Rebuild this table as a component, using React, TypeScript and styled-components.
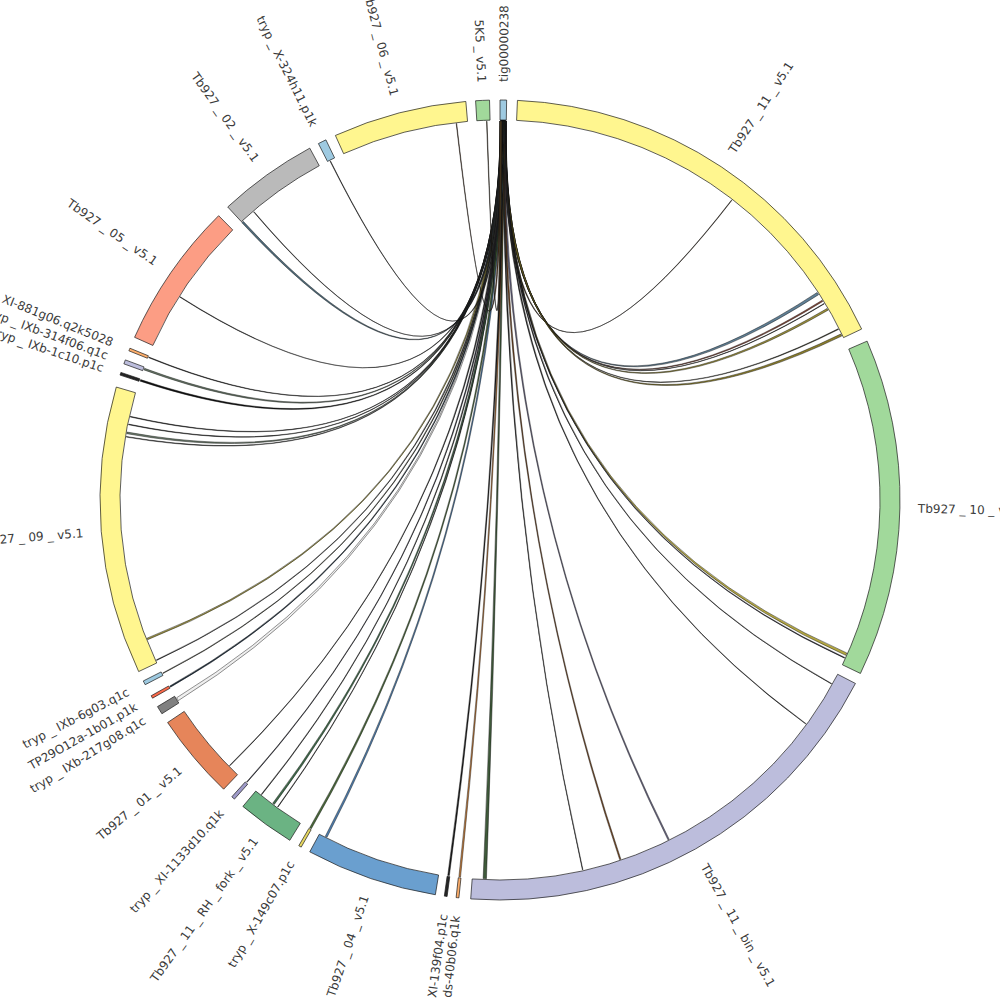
import React from 'react';
import styled, { createGlobalStyle } from 'styled-components';

// geometry of the ideogram ring
const CX = 500;
const CY = 500;
const R_OUT = 400;
const R_IN = 380;
const R_LINK = 379;
const R_LABEL = 418;

const GlobalStyle = createGlobalStyle`
  html, body {
    margin: 0;
    padding: 0;
    background: #ffffff;
  }
`;

const Page = styled.div`
  width: 1000px;
  height: 1000px;
  overflow: hidden;
  background: #ffffff;
`;

const Canvas = styled.svg`
  display: block;
  width: 1000px;
  height: 1000px;
`;

const Segment = styled.path<{ $fill: string }>`
  fill: ${(p) => p.$fill};
  stroke: #1a1a1a;
  stroke-width: 0.7;
`;

const Ribbon = styled.path<{ $fill: string }>`
  fill: ${(p) => p.$fill};
  stroke: #0d0d0d;
  stroke-width: 0.45;
`;

const Label = styled.text<{ $anchor: 'start' | 'end' }>`
  font-family: 'DejaVu Sans', Verdana, sans-serif;
  font-size: 12px;
  fill: #3a3a3a;
  text-anchor: ${(p) => p.$anchor};
`;

interface Chrom {
  start: number;
  end: number;
  color: string;
  label: string;
}

// angles in degrees, clockwise from 12 o'clock
const chroms: Chrom[] = [
  { start: 0.0, end: 0.95, color: '#9ecae1', label: 'tig00000238' },
  { start: 2.5, end: 64.7, color: '#fff68f', label: 'Tb927 _ 11 _ v5.1' },
  { start: 66.6, end: 115.7, color: '#a1d99b', label: 'Tb927 _ 10 _ v5.1' },
  { start: 117.3, end: 184.2, color: '#bcbddc', label: 'Tb927 _ 11 _ bin _ v5.1' },
  { start: 185.9, end: 186.3, color: '#fdae6b', label: 'tryp _ ds-40b06.q1k' },
  { start: 187.6, end: 188.0, color: '#252525', label: 'tryp _ XI-139f04.p1c' },
  { start: 189.3, end: 208.4, color: '#6a9fcf', label: 'Tb927 _ 04 _ v5.1' },
  { start: 209.8, end: 210.2, color: '#e6d760', label: 'tryp _ X-149c07.p1c' },
  { start: 211.7, end: 220.0, color: '#6bb383', label: 'Tb927 _ 11 _ RH _ fork _ v5.1' },
  { start: 221.6, end: 222.1, color: '#9e9ac8', label: 'tryp _ XI-1133d10.q1k' },
  { start: 223.7, end: 236.2, color: '#e6855a', label: 'Tb927 _ 01 _ v5.1' },
  { start: 237.7, end: 238.9, color: '#808080', label: 'tryp _ IXb-217g08.q1c' },
  { start: 240.3, end: 240.7, color: '#fb6a4a', label: 'TP29O12a-1b01.p1k' },
  { start: 242.5, end: 243.1, color: '#9ecae1', label: 'tryp _ IXb-6g03.q1c' },
  { start: 244.6, end: 286.4, color: '#fff68f', label: 'Tb927 _ 09 _ v5.1' },
  { start: 288.2, end: 288.6, color: '#252525', label: 'tryp _ IXb-1c10.p1c' },
  { start: 289.9, end: 290.5, color: '#bcbddc', label: 'tryp _ IXb-314f06.q1c' },
  { start: 291.9, end: 292.3, color: '#fdae6b', label: 'tryp _ XI-881g06.q2k5028' },
  { start: 294.0, end: 315.3, color: '#fc9d84', label: 'Tb927 _ 05 _ v5.1' },
  { start: 317.1, end: 331.6, color: '#bababa', label: 'Tb927 _ 02 _ v5.1' },
  { start: 333.0, end: 334.2, color: '#9ecae1', label: 'tryp _ X-324h11.p1k' },
  { start: 335.7, end: 355.1, color: '#fff68f', label: 'Tb927 _ 06 _ v5.1' },
  { start: 356.5, end: 358.5, color: '#a1d99b', label: '5K5 _ v5.1' },
];

// every link starts on tig00000238; [target angle, target width, fill]
const links: [number, number, string][] = [
  [37.7, 0.08, '#3a2a1a'],
  [57.0, 0.4, '#5f7f95'],
  [58.3, 0.2, '#8a4a3a'],
  [58.8, 0.08, '#2a2a2a'],
  [59.8, 0.3, '#9a8f3a'],
  [63.2, 0.12, '#3a3a2a'],
  [64.2, 0.35, '#8a7d2a'],
  [114.0, 0.4, '#b3a640'],
  [114.6, 0.12, '#1a1a2a'],
  [119.0, 0.08, '#2a2a2a'],
  [126.2, 0.08, '#2a2a2a'],
  [153.6, 0.2, '#6d6a8a'],
  [161.5, 0.2, '#7a4a22'],
  [167.4, 0.08, '#2a2a2a'],
  [182.3, 0.5, '#3f5a3a'],
  [186.1, 0.25, '#c07a3a'],
  [187.8, 0.25, '#1a1a1a'],
  [207.3, 0.3, '#4f7fb0'],
  [210.0, 0.3, '#4a6a3a'],
  [215.9, 0.08, '#2a2a2a'],
  [216.7, 0.3, '#3f6b4a'],
  [219.0, 0.1, '#333333'],
  [221.9, 0.1, '#2a2a3a'],
  [225.5, 0.08, '#2a2a2a'],
  [238.3, 0.5, '#efefef'],
  [240.5, 0.2, '#1f2f3f'],
  [242.8, 0.1, '#3a3a2a'],
  [245.0, 0.1, '#3a3a3a'],
  [248.5, 0.25, '#9a9040'],
  [279.6, 0.1, '#2a2a2a'],
  [280.2, 0.25, '#6f7f6f'],
  [281.5, 0.1, '#2a2a2a'],
  [282.7, 0.1, '#2a2a2a'],
  [288.4, 0.25, '#111111'],
  [290.2, 0.25, '#6a7a6a'],
  [292.1, 0.1, '#2a2a2a'],
  [302.4, 0.08, '#2a2a2a'],
  [317.2, 0.3, '#4d6a7a'],
  [319.5, 0.08, '#2a2a2a'],
  [333.4, 0.08, '#2a2a2a'],
  [353.4, 0.08, '#5a3a20'],
  [358.0, 0.08, '#4a3a20'],
];

const rad = (deg: number) => (deg * Math.PI) / 180;
const pt = (deg: number, r: number) =>
  `${(CX + r * Math.sin(rad(deg))).toFixed(2)} ${(CY - r * Math.cos(rad(deg))).toFixed(2)}`;

const segmentPath = (a: number, b: number) => {
  const large = b - a > 180 ? 1 : 0;
  return [
    `M ${pt(a, R_OUT)}`,
    `A ${R_OUT} ${R_OUT} 0 ${large} 1 ${pt(b, R_OUT)}`,
    `L ${pt(b, R_IN)}`,
    `A ${R_IN} ${R_IN} 0 ${large} 0 ${pt(a, R_IN)}`,
    'Z',
  ].join(' ');
};

// hub span h1..h2, target span t1..t2 (all clockwise after the hub)
const ribbonPath = (h1: number, h2: number, t1: number, t2: number) =>
  [
    `M ${pt(h1, R_LINK)}`,
    `A ${R_LINK} ${R_LINK} 0 0 1 ${pt(h2, R_LINK)}`,
    `Q ${CX} ${CY} ${pt(t1, R_LINK)}`,
    `A ${R_LINK} ${R_LINK} 0 0 1 ${pt(t2, R_LINK)}`,
    `Q ${CX} ${CY} ${pt(h1, R_LINK)}`,
    'Z',
  ].join(' ');

const HUB_FROM = 0.12;
const HUB_TO = 0.83;
const HUB_W = 0.3;

const ChordDiagram = () => {
  const sorted = [...links].sort((a, b) => a[0] - b[0]);
  const step = (HUB_TO - HUB_FROM) / (sorted.length - 1);

  return (
    <Canvas viewBox="0 0 1000 1000" xmlns="http://www.w3.org/2000/svg">
      <g>
        {sorted.map(([t, w, fill], i) => {
          const h = HUB_TO - i * step;
          return (
            <Ribbon
              key={`link-${i}`}
              $fill={fill}
              d={ribbonPath(h - HUB_W / 2, h + HUB_W / 2, t - w / 2, t + w / 2)}
            />
          );
        })}
      </g>
      <g>
        {chroms.map((c) => (
          <Segment key={c.label} $fill={c.color} d={segmentPath(c.start, c.end)} />
        ))}
      </g>
      <g>
        {chroms.map((c) => {
          const mid = (c.start + c.end) / 2;
          const right = mid < 180;
          const x = CX + R_LABEL * Math.sin(rad(mid));
          const y = CY - R_LABEL * Math.cos(rad(mid));
          const rot = right ? mid - 90 : mid + 90;
          return (
            <Label
              key={`label-${c.label}`}
              $anchor={right ? 'start' : 'end'}
              x={x}
              y={y}
              dy="0.36em"
              transform={`rotate(${rot.toFixed(2)} ${x.toFixed(2)} ${y.toFixed(2)})`}
            >
              {c.label}
            </Label>
          );
        })}
      </g>
    </Canvas>
  );
};

const App = () => (
  <Page>
    <GlobalStyle />
    <ChordDiagram />
  </Page>
);

export default App;
